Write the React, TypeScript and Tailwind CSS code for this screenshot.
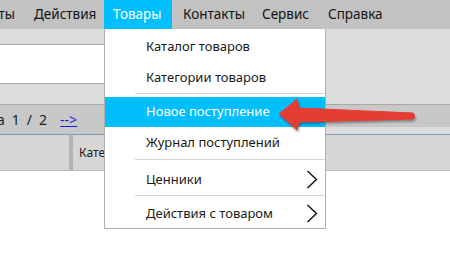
import { ReactNode } from 'react';

const FONT = "font-['Noto_Sans','Open_Sans',sans-serif]";

function Chevron() {
  return (
    <svg width="12" height="19" viewBox="0 0 12 19" className="shrink-0">
      <polyline points="1.5,1 10.5,9.5 1.5,18" fill="none" stroke="#111" strokeWidth="1.4" />
    </svg>
  );
}

function Item({ h, pt = 0, children, active, sub }: { h: number; pt?: number; children: ReactNode; active?: boolean; sub?: boolean }) {
  return (
    <div
      className={`flex items-center justify-between pl-[41px] pr-[7px] ${active ? 'bg-[#00bfff] text-white' : 'text-[#1a1a1a]'}`}
      style={{ height: h, paddingTop: pt }}
    >
      <span>{children}</span>
      {sub && <Chevron />}
    </div>
  );
}

function Sep() {
  return <div className="ml-[30px] h-px bg-[#d4d4d4]" />;
}

export default function App() {
  return (
    <div className={`relative w-[450px] h-[272px] overflow-hidden bg-white ${FONT}`}>
      {/* menu bar */}
      <div className="flex h-[29px] items-center bg-[#c2c2c2] text-[13.5px] text-[#141414]">
        <div className="flex w-[24px] justify-end pr-[9px] whitespace-nowrap">ты</div>
        <div className="w-[80px] pl-[10px]">Действия</div>
        <div className="flex h-full w-[68px] items-center bg-[#00bfff] pl-[9px] text-white">Товары</div>
        <div className="w-[79px] pl-[11px]">Контакты</div>
        <div className="w-[67px] pl-[11px]">Сервис</div>
        <div className="pl-[10px]">Справка</div>
      </div>

      {/* filter area */}
      <div className="bg-[#dcdcdc] pt-[15px] pb-[20px] border-b border-[#a8a8a8]">
        <div className="h-[40px] w-[260px] border-y border-[#a8a8a8] bg-white" />
      </div>

      {/* pager */}
      <div className="flex h-[29px]">
        <div className="flex w-[110px] items-center bg-[#c8c8c8] text-[14px] text-[#222]">
          <span className="-ml-[3px]">а</span>
          <span className="ml-[7px]">1</span>
          <span className="ml-[7px]">/</span>
          <span className="ml-[7px]">2</span>
          <span className="ml-[13px] text-[#1a1ae6] underline">--&gt;</span>
        </div>
        <div className="flex flex-1 flex-col">
          <div className="h-[22px] bg-[#c8c8c8]" />
          <div className="flex-1 bg-[#dcdcdc]" />
        </div>
      </div>
      <div className="h-px bg-[#7f9bb8]" />

      {/* grid header */}
      <div className="flex h-[36px] border-b border-[#bcbcbc] bg-[#d6d6d6]">
        <div className="w-[69px]" />
        <div className="w-[4px] bg-[#b4b4b4]" />
        <div className="flex items-center pl-[6px] text-[12px] text-[#202020]">Категория</div>
      </div>

      {/* dropdown */}
      <div className="absolute left-[104px] top-[29px] w-[222px] border-x border-b border-[#b0b0b0] bg-white text-[13px]">
        <Item h={36}>Каталог товаров</Item>
        <Item h={26}>Категории товаров</Item>
        <div className="flex h-[6px] flex-col pt-[2px]">
          <Sep />
        </div>
        <Item h={30} active>Новое поступление</Item>
        <Item h={32}>Журнал поступлений</Item>
        <Sep />
        <Item h={35} pt={4} sub>Ценники</Item>
        <Sep />
        <Item h={32} pt={3} sub>Действия с товаром</Item>
      </div>

      {/* annotation arrow */}
      <svg className="absolute left-0 top-0 pointer-events-none" width="450" height="272" style={{ filter: 'drop-shadow(1px 2px 1px rgba(0,0,0,0.35))' }}>
        <path
          d="M279 114 L297 99 L299 108 L413 113 Q416 116 413 119 L299 122 L297 130 Z"
          fill="#e53d34"
          strokeLinejoin="round"
          stroke="#e53d34"
          strokeWidth="1"
        />
      </svg>
    </div>
  );
}
